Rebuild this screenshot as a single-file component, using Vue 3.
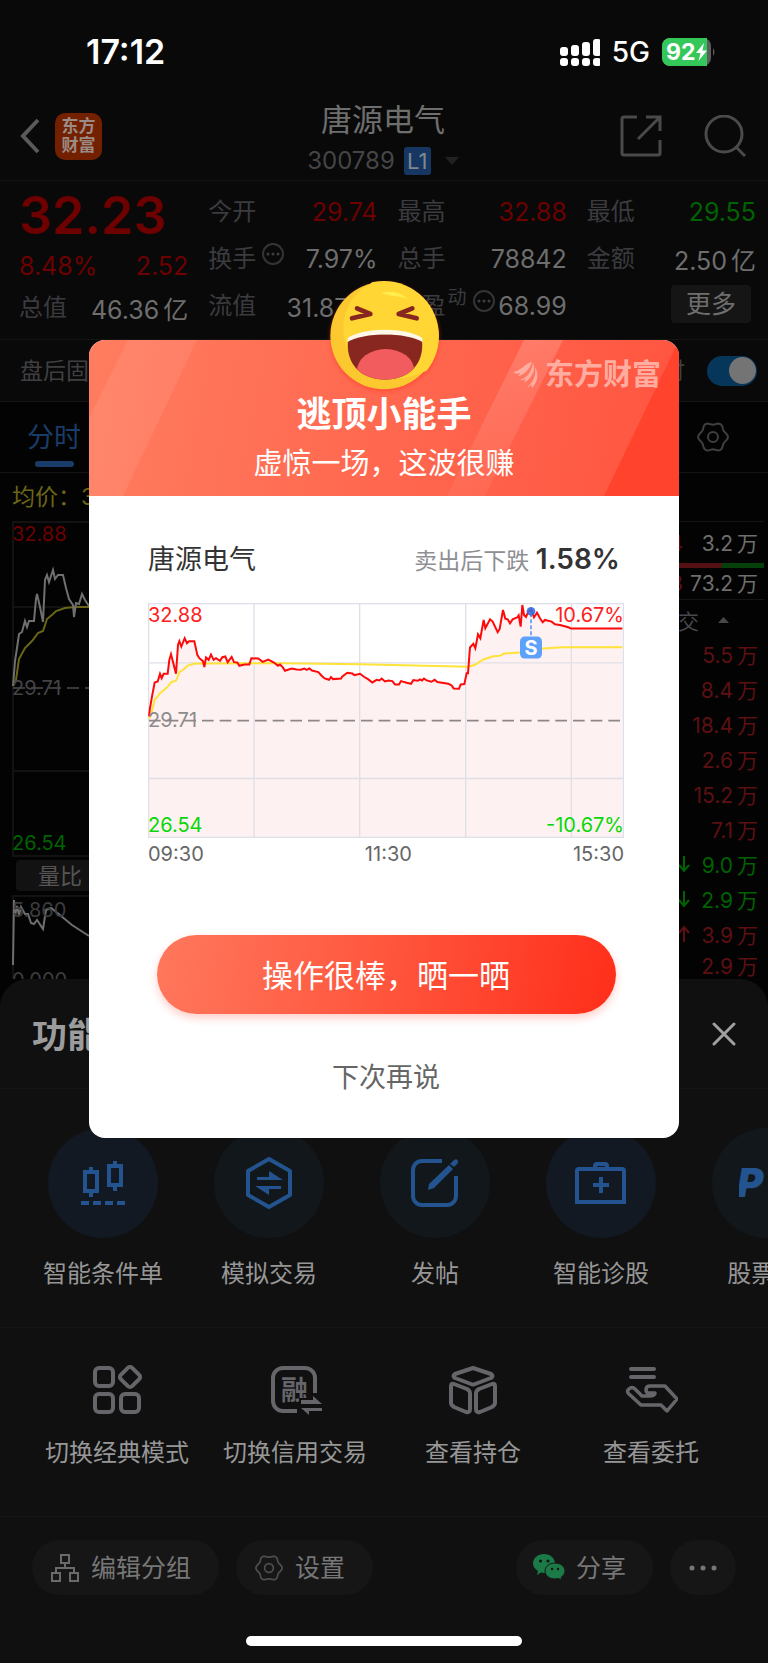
<template>
  <div class="page">
    <header class="status">
      <span class="time">17:12</span>
      <div class="status-right">
        <svg width="40" height="28" viewBox="0 0 40 28" fill="#fff">
          <rect v-for="(h, i) in [9, 11, 14, 17]" :key="'a' + h" :x="i * 11" :y="18 - h" width="8" :height="h" rx="3" />
          <rect v-for="i in 4" :key="i" :x="(i - 1) * 11" y="20" width="8" height="8" rx="3" />
        </svg>
        <span class="net">5G</span>
        <svg width="54" height="28" viewBox="0 0 54 28">
          <rect width="49" height="28" rx="8" fill="#5c5c5e" />
          <path d="M8 0H45V28H8A8 8 0 0 1 0 20V8A8 8 0 0 1 8 0Z" fill="#34c759" />
          <path d="M51 10Q54 14 51 18Z" fill="#5c5c5e" />
          <text x="4" y="22" class="battery">92</text>
          <path d="M42 5L34 15H38.500L36.500 23L45 12.500H40.500Z" fill="#fff" />
        </svg>
      </div>
    </header>

    <nav class="navbar">
      <div class="nav-left">
        <button class="plain" aria-label="返回">
          <svg width="20" height="36" viewBox="0 0 20 36" fill="none" stroke="#5a5a5a" stroke-width="4"><path d="M18 2L3 18L18 34" /></svg>
        </button>
        <a href="#" class="app-logo"><span>东方</span><span>财富</span></a>
      </div>
      <div class="nav-title">
        <h1>唐源电气</h1>
        <div class="code">
          <span>300789</span><b>L1</b>
          <svg width="14" height="8" viewBox="0 0 14 8"><path d="M0 0H14L7 8Z" fill="#222225" /></svg>
        </div>
      </div>
      <div class="nav-right">
        <button class="plain" aria-label="分享页面">
          <svg width="42" height="42" viewBox="0 0 42 42" fill="none" stroke="#4a4a4a" stroke-width="3">
            <path d="M17 2H4Q2 2 2 4V38Q2 40 4 40H38Q40 40 40 38V25M26 2H40V16M40 2L18 24" />
          </svg>
        </button>
        <button class="plain" aria-label="搜索">
          <svg width="42" height="42" viewBox="0 0 42 42" fill="none" stroke="#4a4a4a" stroke-width="3">
            <circle cx="20" cy="19" r="18" /><path d="M32 32L41 41" />
          </svg>
        </button>
      </div>
    </nav>

    <section class="quote">
      <div class="price-col">
        <strong>32.23</strong>
        <p class="red change"><span>8.48%</span><span>2.52</span></p>
        <p><label>总值</label><span>46.36<i>亿</i></span></p>
      </div>
      <div v-for="(col, i) in quotes" :key="i" class="quote-col">
        <p v-for="q in col" :key="q.label">
          <label>{{ q.label }}<sup v-if="q.sup">{{ q.sup }}</sup><svg v-if="q.more" width="22" height="22" viewBox="0 0 22 22">
            <circle cx="11" cy="11" r="10" fill="none" stroke="#343437" stroke-width="2" />
            <circle v-for="n in 3" :key="n" :cx="1 + n * 5" cy="11" r="1.500" fill="#3e3e42" />
          </svg></label>
          <span :class="q.tone">{{ q.value }}<i v-if="q.unit">{{ q.unit }}</i></span>
        </p>
        <button v-if="i === 2" class="more">更多</button>
      </div>
    </section>

    <section class="after-hours">
      <span>盘后固</span>
      <label class="switch-label">时<input type="checkbox" checked /></label>
    </section>

    <section class="tabs">
      <button class="plain tab">分时</button>
      <button class="plain" aria-label="图表设置">
        <svg width="32" height="32" viewBox="0 0 32 32" fill="none" stroke="#3f3f42" stroke-width="2">
          <path :d="gear" /><circle cx="16" cy="16" r="5" />
        </svg>
      </button>
    </section>

    <section class="market">
      <div class="market-left">
        <p class="avg">均价：3</p>
        <div class="back-chart">
          <svg width="100%" height="336" fill="none">
            <path d="M1 336V1H640M1 86H640M1 250H640M1 335H640" stroke="#121213" stroke-width="2" />
            <path d="M1 167H640" stroke="#3a3a3d" stroke-width="2" stroke-dasharray="12 6" />
            <polyline stroke="#6b6518" stroke-width="2" points="1,165 4,159 7,138 13,127 20,120 26,112 31,110 35,98 41,93 44,90 53,87 63,86 77,86" />
            <polyline stroke="#707070" stroke-width="2" points="1,165 3,140 5,127 7,113 10,111 13,100 15,106 17,100 22,100 24,78 25,73 28,86 31,101 33,59 35,54 37,61 41,49 43,58 46,54 51,54 54,67 57,78 61,84 62,96 64,82 67,83 70,73 73,79 77,85" />
          </svg>
          <span class="mark top red">32.88</span>
          <span class="mark middle">29.71</span>
          <span class="mark bottom green">26.54</span>
        </div>
        <button class="ratio">量比</button>
        <div class="back-chart sub">
          <svg width="100%" height="84" fill="none">
            <path d="M1 84V1H640" stroke="#121213" stroke-width="2" />
            <polyline stroke="#6e6e6e" stroke-width="2" points="1,70 2,5 3,21 5,11 7,20 9,12 13,19 16,19 19,28 22,29 25,25 31,34 34,15 39,13 43,16 60,30 77,41" />
          </svg>
          <span class="mark top">5.860</span>
          <span class="mark zero">0.000</span>
        </div>
      </div>
      <div class="market-right">
        <p class="order first"><span class="red">4</span><b>3.2<i>万</i></b></p>
        <div class="ratio-bar"></div>
        <p class="order"><span class="red">3</span><b>73.2<i>万</i></b></p>
        <div class="deal-head">
          <span>交</span>
          <svg width="11" height="6" viewBox="0 0 11 6"><path d="M0 6H11L5.500 0Z" fill="#48484b" /></svg>
        </div>
        <ul>
          <li v-for="(d, i) in deals" :key="i" :class="d.tone">
            <svg v-if="d.arrow" width="12" height="18" viewBox="0 0 12 18" fill="none" stroke="currentColor" stroke-width="2">
              <path :d="d.arrow === 'down' ? 'M6 1V16M1 10L6 16L11 10' : 'M6 17V2M1 8L6 2L11 8'" />
            </svg>
            <b>{{ d.value }}<i>万</i></b>
          </li>
        </ul>
      </div>
    </section>

    <section class="sheet">
      <div class="sheet-head">
        <h2>功能</h2>
        <button class="plain" aria-label="关闭">
          <svg width="24" height="24" viewBox="0 0 24 24" stroke="#a0a0a0" stroke-width="3" stroke-linecap="round"><path d="M2 2L22 22M22 2L2 22" /></svg>
        </button>
      </div>

      <div class="round-row">
        <button v-for="r in rounds" :key="r.label" class="plain round-item">
          <span class="circle" :class="{ blue: r.blue }">
            <svg width="56" height="56" viewBox="0 0 56 56" fill="none" stroke="#23548f" stroke-width="4">
              <template v-if="r.icon === 'candle'">
                <path d="M10 17H22V36H10ZM34 11H46V30H34ZM16 12V17M16 36V42M40 6V11M40 30V36" />
                <path d="M6 48H50" stroke-dasharray="8 4" />
              </template>
              <template v-else-if="r.icon === 'trade'">
                <path d="M28 4L49 16V40L28 52L7 40V16Z" stroke-linejoin="round" />
                <path d="M16 22H28V16L42 25H16ZM40 31H14L28 40V34H40Z" fill="#23548f" stroke="none" />
              </template>
              <template v-else-if="r.icon === 'post'">
                <path d="M35 6H15A9 9 0 0 0 6 15V41A9 9 0 0 0 15 50H40A9 9 0 0 0 49 41V21" />
                <path d="M21 35L22 29L42 10L46 14L27 33ZM43 9L47 5Q50 3 51 6V8L47 12Z" fill="#23548f" stroke="none" />
              </template>
              <template v-else-if="r.icon === 'clinic'">
                <path d="M4 47V16Q4 14 6 14H49Q51 14 51 16V47ZM22 13V11Q22 9 24 9H32Q34 9 34 11V13M28 22V38M20 30H36" />
              </template>
              <text v-else x="-2" y="42" class="pk">P</text>
            </svg>
          </span>
          <span class="caption">{{ r.label }}</span>
        </button>
      </div>

      <div class="grid-row">
        <button v-for="g in grids" :key="g.label" class="plain grid-item">
          <svg width="54" height="50" viewBox="0 0 54 50" fill="none" stroke="#66656a" stroke-width="4" stroke-linejoin="round">
            <template v-if="g.icon === 'blocks'">
              <rect x="5" y="3" width="18" height="18" rx="4" /><rect x="5" y="29" width="18" height="18" rx="4" />
              <rect x="31" y="29" width="18" height="18" rx="4" />
              <rect x="32" y="4" width="16" height="16" rx="3" transform="rotate(45 40 12)" />
            </template>
            <template v-else-if="g.icon === 'credit'">
              <path d="M29 46H15A10 10 0 0 1 5 36V13A10 10 0 0 1 15 3H37A10 10 0 0 1 47 13V28" />
              <text x="13" y="35" class="rong">融</text>
              <rect x="31" y="33" width="24" height="18" fill="#101010" stroke="none" />
              <path d="M33 35H45V31L54 39H33ZM54 43H33L41 50V46H54Z" fill="#66656a" stroke="none" />
            </template>
            <template v-else-if="g.icon === 'cube'">
              <path d="M27 3L45 9Q48 11 45 13L29 19Q27 20 25 19L9 13Q6 11 9 9Z" />
              <path d="M5 21Q5 18 8 19L21 24Q24 26 24 28V44Q24 48 20 47L8 42Q5 40 5 38ZM49 21Q49 18 46 19L33 24Q30 26 30 28V44Q30 48 34 47L46 42Q49 40 49 38Z" />
            </template>
            <template v-else>
              <path d="M7 4H30M7 12H30" stroke-linecap="round" />
              <path d="M5 24Q8 21 11 24L18 31H25Q31 31 31 28H25Q22 28 22 25Q22 21 26 21H41L53 34L43 46L37 40H17L5 29Q2 26 5 24Z" stroke-width="3.500" />
            </template>
          </svg>
          <span class="caption">{{ g.label }}</span>
        </button>
      </div>

      <footer class="actions">
        <button>
          <svg width="28" height="28" viewBox="0 0 28 28" fill="none" stroke="#6a6a6a" stroke-width="2">
            <path d="M10 1H18V9H10ZM1 19H9V27H1ZM19 19H27V27H19ZM14 9V14M5 19V14H23V19" />
          </svg>
          编辑分组
        </button>
        <button>
          <svg width="28" height="28" viewBox="0 0 32 32" fill="none" stroke="#4d4d50" stroke-width="2">
            <path :d="gear" /><circle cx="16" cy="16" r="5" />
          </svg>
          设置
        </button>
        <button class="share">
          <svg width="32" height="27" viewBox="0 0 32 27">
            <path d="M11 0C17 0 22 4 22 9.500C22 15 17 19 11 19L8 18.500L4 21L5 17C2 15 0 13 0 9.500C0 4 5 0 11 0Z" fill="#1b7a45" />
            <path d="M22 9C27.500 9 32 12.500 32 17C32 20 30 22 28 23.500L29 26.500L25.500 24.500L22 25C16.500 25 12 21.500 12 17C12 12.500 16.500 9 22 9Z" fill="#1b7a45" stroke="#171717" />
            <circle cx="7.500" cy="7" r="1.500" fill="#111" /><circle cx="15" cy="7" r="1.500" fill="#111" />
            <circle cx="19" cy="15" r="1.200" fill="#111" /><circle cx="25" cy="15" r="1.200" fill="#111" />
          </svg>
          分享
        </button>
        <button class="dots" aria-label="更多操作">
          <svg width="28" height="6" viewBox="0 0 28 6" fill="#777"><circle cx="3" cy="3" r="2.500" /><circle cx="14" cy="3" r="2.500" /><circle cx="25" cy="3" r="2.500" /></svg>
        </button>
      </footer>
      <div class="home-bar"></div>
    </section>

    <div class="overlay">
      <div class="modal" role="dialog" aria-labelledby="modal-title">
        <svg class="emoji" width="110" height="110" viewBox="57 32 330 330">
          <defs>
            <clipPath id="mouth"><path d="M113 215C160 185 290 185 337 215C340 290 290 328 225 328C160 328 110 290 113 215Z" /></clipPath>
          </defs>
          <circle cx="222" cy="196" r="161" fill="#fbc92f" />
          <path d="M180 41A161 161 0 1 1 340 305C260 350 100 310 100 175C100 120 130 65 180 41Z" fill="#ffd633" />
          <path d="M213 68C240 58 280 68 292 87C270 75 240 80 213 68Z" fill="#ffec4f" />
          <path d="M141 114L181 131L126 144M307 114L266 131L320 144" fill="none" stroke="#87271f" stroke-width="14" stroke-linecap="round" stroke-linejoin="round" />
          <path d="M113 203C160 170 290 170 337 203V222H113Z" fill="#fff8e8" />
          <g clip-path="url(#mouth)">
            <rect x="100" y="180" width="250" height="150" fill="#87271f" />
            <ellipse cx="227" cy="301" rx="86" ry="65" fill="#f25c5e" />
          </g>
        </svg>
        <header class="banner">
          <svg class="rays" viewBox="0 0 590 156" preserveAspectRatio="none">
            <defs>
              <linearGradient id="ray" x1="0" y1="0" x2="0" y2="1">
                <stop offset="0" stop-color="#fff" stop-opacity=".17" />
                <stop offset="1" stop-color="#fff" stop-opacity=".05" />
              </linearGradient>
            </defs>
            <path d="M39 0H108L34 156H0V78Z" fill="#fff" fill-opacity=".08" />
            <path d="M435 0H474L396 156H358Z" fill="url(#ray)" />
            <path d="M590 0V156H515Z" fill="#ff432d" />
          </svg>
          <div class="brand">
            <svg width="25" height="26" viewBox="0 0 25 26" fill="#ffada0">
              <path d="M0 10C7 10 12 1 19 0C17 7 10 14 5 14Q7 12 7 11Q3 13 0 10ZM7 18C16 15 19 7 20 1C23 7 20 15 11 21Q13 18 12 17Q10 19 7 18ZM14 25C21 20 23 13 22 5C26 12 25 19 19 26L18 22Q17 25 14 25Z" />
            </svg>
            东方财富
          </div>
          <h2 id="modal-title">逃顶小能手</h2>
          <p>虚惊一场，这波很赚</p>
        </header>
        <div class="modal-body">
          <div class="modal-head">
            <h3>唐源电气</h3>
            <p>卖出后下跌 <b>1.58%</b></p>
          </div>
          <div class="chart">
            <!-- three drawing units per pixel -->
            <svg viewBox="24 219 1428 707" preserveAspectRatio="none" fill="none">
              <path :d="`M27 922L${price}L1447 922Z`" fill="#fef1f1" />
              <path d="M342 220V925M659 220V925M977 220V925M1294 220V925M24 399H1452M24 747H1452" stroke="#dfdfe8" stroke-width="4" />
              <rect x="26" y="221" width="1424" height="703" stroke="#dfe1ea" stroke-width="4" />
              <path d="M27 573H1447" stroke="#8e8788" stroke-width="5" stroke-dasharray="35 18" />
              <polyline :points="average" stroke="#ffe338" stroke-width="6" />
              <polyline :points="price" stroke="#fe0a0a" stroke-width="6" />
              <path d="M1173 250V320" stroke="#5b9cf8" stroke-width="5" stroke-dasharray="12 6" />
              <circle cx="1173" cy="244" r="13" fill="#3b6fe0" fill-opacity=".9" />
              <rect x="1140" y="320" width="66" height="66" rx="14" fill="#5ea1fa" />
              <text x="1173" y="376" class="sell">S</text>
            </svg>
            <span class="mark top">32.88</span>
            <span class="mark top right">10.67%</span>
            <span class="mark middle">29.71</span>
            <span class="mark bottom">26.54</span>
            <span class="mark bottom right">-10.67%</span>
          </div>
          <div class="axis"><span>09:30</span><span>11:30</span><span>15:30</span></div>
          <button class="primary">操作很棒，晒一晒</button>
          <button class="plain later">下次再说</button>
        </div>
      </div>
    </div>
  </div>
</template>

<script setup>
const quotes = [
  [
    { label: '今开', value: '29.74', tone: 'red' },
    { label: '换手', value: '7.97%', more: true },
    { label: '流值', value: '31.87', unit: '亿' }
  ],
  [
    { label: '最高', value: '32.88', tone: 'red' },
    { label: '总手', value: '78842' },
    { label: '市盈', sup: '动', value: '68.99', more: true }
  ],
  [
    { label: '最低', value: '29.55', tone: 'green' },
    { label: '金额', value: '2.50', unit: '亿' }
  ]
];

const deals = [
  { value: '5.5', tone: 'red' },
  { value: '8.4', tone: 'red' },
  { value: '18.4', tone: 'red' },
  { value: '2.6', tone: 'red' },
  { value: '15.2', tone: 'red' },
  { value: '7.1', tone: 'red' },
  { value: '9.0', tone: 'green', arrow: 'down' },
  { value: '2.9', tone: 'green', arrow: 'down' },
  { value: '3.9', tone: 'red', arrow: 'up' },
  { value: '2.9', tone: 'red' }
];

const rounds = [
  { label: '智能条件单', icon: 'candle', blue: true },
  { label: '模拟交易', icon: 'trade' },
  { label: '发帖', icon: 'post' },
  { label: '智能诊股', icon: 'clinic', blue: true },
  { label: '股票PK', icon: 'pk' }
];

const grids = [
  { label: '切换经典模式', icon: 'blocks' },
  { label: '切换信用交易', icon: 'credit' },
  { label: '查看持仓', icon: 'cube' },
  { label: '查看委托', icon: 'hand' }
];

// 六瓣齿轮
const gear = 'M' + Array.from({ length: 72 }, (_, i) => {
  const a = (i * Math.PI) / 36;
  const r = 13.6 + 1.3 * Math.cos(6 * a);
  return (16 + r * Math.cos(a)).toFixed(1) + ' ' + (16 + r * Math.sin(a)).toFixed(1);
}).join('L') + 'Z';

const price = '27,560 30,535 36,500 44,458 53,455 60,432 65,445 71,432 83,432 88,390 93,373 100,400 108,432 114,345 118,334 124,350 134,325 141,340 147,334 163,334 172,375 178,385 189,394 193,412 198,383 206,390 213,374 221,390 228,385 240,393 247,382 256,380 263,397 275,381 282,397 292,398 298,408 313,404 328,404 334,385 355,386 368,396 385,389 402,398 414,408 420,404 428,412 435,423 455,416 470,419 482,420 493,416 500,420 508,416 516,422 535,427 545,438 554,446 567,450 573,442 579,448 603,446 607,440 622,429 637,431 643,436 660,432 672,441 685,449 697,458 710,450 718,452 725,446 735,455 745,452 757,454 765,464 777,464 783,454 800,459 813,462 820,451 833,453 840,449 846,452 852,446 860,452 874,456 884,450 892,457 925,462 935,467 941,476 957,477 962,464 973,463 980,430 984,430 990,353 1000,342 1006,355 1014,313 1021,325 1031,270 1036,295 1050,268 1058,275 1073,307 1079,297 1089,240 1096,266 1103,268 1110,280 1118,268 1132,262 1136,256 1142,290 1147,225 1152,255 1158,261 1165,245 1173,238 1182,262 1191,248 1200,265 1208,277 1215,270 1235,275 1245,283 1260,285 1285,292 1293,296 1447,296';
const average = '27,567 36,545 44,510 53,500 60,490 72,481 84,470 94,457 108,453 119,426 130,420 142,408 160,402 185,401 420,400 660,403 985,411 1005,405 1030,389 1060,379 1080,378 1092,371 1140,368 1172,360 1220,355 1270,352 1447,352';
</script>

<style>
body {
  background: #030303;
}
</style>

<style scoped>
.page, .page * {
  box-sizing: border-box;
}
.page {
  position: relative;
  overflow: hidden;
  background: #030303;
  color: #6e6e6e;
  font-family: Inter, "Noto Sans CJK SC", sans-serif;
}
h1, h2, h3, p, ul {
  margin: 0;
  padding: 0;
  font-weight: 400;
}
i {
  font-style: normal;
  margin-left: 4px;
}
svg {
  display: block;
  flex: none;
}
button {
  font-family: inherit;
  border: 0;
  cursor: pointer;
}
.plain {
  background: none;
  padding: 0;
}
.red {
  color: #6d0000;
}
.green {
  color: #006200;
}

.status {
  display: flex;
  justify-content: space-between;
  align-items: center;
  height: 92px;
  padding: 11px 52px 0 86px;
  background: #090909;
  color: #fff;
}
.time {
  font-size: 34px;
  font-weight: 600;
}
.status-right {
  display: flex;
  align-items: center;
  gap: 12px;
}
.net {
  font-size: 28px;
  font-weight: 500;
}
.battery {
  font-size: 23px;
  font-weight: 700;
  fill: #fff;
}

.navbar {
  display: grid;
  grid-template-columns: 1fr auto 1fr;
  align-items: center;
  height: 89px;
  padding: 0 22px 0 20px;
  background: #090909;
  border-bottom: 1px solid #141414;
}
.nav-left {
  display: flex;
  align-items: center;
  gap: 15px;
}
.app-logo {
  display: flex;
  flex-direction: column;
  align-items: center;
  justify-content: center;
  width: 47px;
  height: 47px;
  border-radius: 10px;
  background: #732000;
  color: #9b8b84;
  font-size: 17px;
  font-weight: 700;
  line-height: 19px;
  text-decoration: none;
}
.nav-title {
  padding-top: 2px;
}
.nav-title h1 {
  margin-bottom: 7px;
  font-size: 31px;
  line-height: 40px;
  text-align: center;
}
.code {
  display: flex;
  align-items: center;
  justify-content: center;
  gap: 9px;
  height: 28px;
  font-size: 24px;
  color: #454548;
}
.code b {
  width: 27px;
  line-height: 28px;
  border-radius: 3px;
  background: #163761;
  color: #808890;
  font-size: 22px;
  font-weight: 400;
  text-align: center;
}
.code svg {
  margin-left: 5px;
}
.nav-right {
  display: flex;
  justify-content: flex-end;
  gap: 42px;
}

.quote {
  display: grid;
  grid-template-columns: repeat(4, 1fr);
  gap: 20px;
  height: 159px;
  padding: 7px 12px 0 19px;
  background: #090909;
  border-bottom: 1px solid #141414;
  font-size: 25px;
}
.quote p {
  display: flex;
  justify-content: space-between;
  align-items: center;
  height: 47px;
  white-space: nowrap;
}
.quote label {
  display: flex;
  align-items: center;
  gap: 6px;
  font-size: 24px;
  line-height: 34px;
  color: #3b3b3f;
}
.quote label svg {
  margin-bottom: 10px;
}
.quote sup {
  margin: 0 0 16px -4px;
  font-size: 19px;
  line-height: 20px;
}
.price-col strong {
  display: block;
  font-size: 52px;
  font-weight: 600;
  line-height: 55px;
  color: #6d0000;
}
.quote .price-col p {
  height: 37px;
}
.quote .price-col .change {
  height: 46px;
}
.more {
  display: block;
  width: 80px;
  height: 38px;
  margin: 3px 5px 0 auto;
  padding: 0;
  border-radius: 4px;
  background: #151515;
  color: #6e6e6e;
  font-size: 25px;
  line-height: 38px;
}

.after-hours {
  display: flex;
  justify-content: space-between;
  align-items: center;
  height: 62px;
  padding: 0 11px 0 20px;
  background: #090909;
  border-bottom: 1px solid #141414;
  font-size: 23px;
  line-height: 34px;
  color: #3f3f42;
}
.switch-label {
  display: flex;
  align-items: center;
  gap: 22px;
}
.switch-label input {
  appearance: none;
  display: flex;
  justify-content: flex-end;
  align-items: center;
  width: 50px;
  height: 30px;
  margin: 0;
  padding: 1px;
  border-radius: 15px;
  background: #06365a;
}
.switch-label input::after {
  content: "";
  width: 27px;
  height: 27px;
  border-radius: 50%;
  background: #747474;
}

.tabs {
  display: flex;
  justify-content: space-between;
  align-items: center;
  height: 71px;
  padding: 0 39px 0 27px;
  border-bottom: 1px solid #141414;
}
.tab {
  display: flex;
  flex-direction: column;
  align-items: center;
  height: 100%;
  padding-top: 16px;
  color: #1a3c69;
  font-size: 27px;
  line-height: 40px;
}
.tab::after {
  content: "";
  width: 39px;
  height: 6px;
  margin-top: 3px;
  border-radius: 3px;
  background: #1a3c69;
}

.market {
  display: flex;
}
.market-left {
  flex: 1;
  min-width: 0;
  padding-left: 12px;
}
.avg {
  font-size: 23px;
  line-height: 48px;
  color: #6b6518;
}
.back-chart, .chart {
  position: relative;
}
.mark {
  position: absolute;
  left: 0;
  font-size: 20px;
  line-height: 24px;
}
.back-chart .top {
  top: 1px;
}
.back-chart .middle {
  top: 155px;
  color: #444447;
}
.back-chart .bottom {
  bottom: 2px;
  color: #006200;
}
.ratio {
  display: block;
  height: 31px;
  margin: 3px 0 4px 4px;
  padding: 0 22px;
  border-radius: 4px;
  background: #121212;
  color: #555;
  font-size: 22px;
  line-height: 32px;
}
.sub {
  height: 84px;
  overflow: hidden;
  color: #3c3c3f;
}
.sub .top {
  top: 3px;
}
.sub .zero {
  top: 73px;
}
.market-right {
  width: 130px;
  padding: 48px 4px 0 0;
  font-size: 21px;
}
.market-right b {
  font-weight: 400;
}
.order {
  display: flex;
  justify-content: flex-end;
  padding-right: 6px;
  border-bottom: 1px solid #141414;
  line-height: 31px;
}
.order.first {
  padding-top: 2px;
  border-top: 1px solid #141414;
  border-bottom: 0;
  line-height: 39px;
}
.order b {
  width: 75px;
  text-align: right;
}
.ratio-bar {
  height: 5px;
  background: linear-gradient(115deg, #541114 66%, #05400a 66%);
}
.deal-head {
  display: flex;
  justify-content: flex-end;
  align-items: center;
  gap: 19px;
  height: 36px;
  padding: 3px 35px 0 0;
  color: #48484b;
}
ul {
  list-style: none;
}
li {
  display: flex;
  justify-content: flex-end;
  align-items: center;
  height: 35px;
  padding-right: 6px;
}
li:last-child {
  height: 28px;
}
li b {
  width: 68px;
  text-align: right;
}
.market-right .red {
  color: #5c1012;
}

.sheet {
  padding-bottom: 17px;
  border-radius: 28px 28px 0 0;
  background: #101010;
}
.sheet-head {
  display: flex;
  justify-content: space-between;
  align-items: center;
  height: 110px;
  padding: 0 32px;
  border-bottom: 1px solid #161616;
}
.sheet-head h2 {
  padding-bottom: 3px;
  font-size: 35px;
  font-weight: 600;
  color: #9c9c9c;
}
.round-row {
  display: flex;
  overflow: hidden;
  padding: 39px 0 36px 20px;
  border-bottom: 1px solid #161616;
}
.round-item, .grid-item {
  display: flex;
  flex-direction: column;
  align-items: center;
}
.round-item {
  flex: 0 0 166px;
  gap: 19px;
}
.circle {
  display: flex;
  align-items: center;
  justify-content: center;
  width: 110px;
  height: 110px;
  border-radius: 50%;
  background: #11171a;
}
.circle.blue {
  background: #121922;
}
.caption {
  font-size: 24px;
  line-height: 34px;
  color: #979797;
  white-space: nowrap;
}
.pk {
  font-size: 40px;
  font-style: italic;
  font-weight: 900;
  fill: #23548f;
  stroke: none;
}
.grid-row {
  display: grid;
  grid-template-columns: repeat(4, 1fr);
  padding: 37px 28px 46px;
  border-bottom: 1px solid #161616;
}
.grid-item {
  gap: 21px;
}
.rong {
  font-size: 27px;
  font-weight: 700;
  fill: #66656a;
  stroke: none;
}
.actions {
  display: flex;
  gap: 17px;
  padding: 23px 32px 41px;
}
.actions button {
  display: flex;
  align-items: center;
  gap: 12px;
  height: 55px;
  padding: 0 28px 0 19px;
  border-radius: 28px;
  background: #161616;
  color: #777;
  font-size: 25px;
  line-height: 34px;
}
.actions .share {
  margin-left: auto;
  padding: 0 27px 0 17px;
  gap: 11px;
}
.actions .dots {
  padding: 0 19px;
}
.home-bar {
  width: 36%;
  height: 10px;
  margin: 0 auto;
  border-radius: 5px;
  background: #fff;
}

.overlay {
  position: absolute;
  inset: 0;
  padding: 340px 89px 0;
}
.modal {
  position: relative;
  border-radius: 16px;
  background: #fff;
}
.emoji {
  position: absolute;
  z-index: 1;
  top: -59px;
  left: 50%;
  margin-left: -55px;
  border-radius: 50%;
  filter: drop-shadow(0 2px 2px rgba(255, 50, 30, .5));
}
.banner {
  position: relative;
  overflow: hidden;
  padding: 53px 0 10px;
  border-radius: 16px 16px 0 0;
  background: linear-gradient(100deg, #ff7d60, #ff684f 50%, #ff5440);
  color: #fff;
  text-align: center;
}
.rays {
  position: absolute;
  inset: 0;
  width: 100%;
  height: 100%;
}
.brand {
  position: absolute;
  top: 15px;
  right: 18px;
  display: flex;
  align-items: center;
  gap: 7px;
  font-size: 29px;
  font-weight: 700;
  line-height: 40px;
  color: #ffada0;
}
.banner h2 {
  position: relative;
  margin-bottom: 7px;
  font-size: 35px;
  font-weight: 600;
  line-height: 42px;
}
.banner p {
  position: relative;
  font-size: 29px;
  line-height: 44px;
}
.modal-body {
  padding: 43px 55px 40px 59px;
}
.modal-head {
  display: flex;
  justify-content: space-between;
  align-items: baseline;
  height: 40px;
  margin-bottom: 24px;
  padding-right: 4px;
  line-height: 40px;
}
.modal-head h3 {
  font-size: 27px;
  color: #333;
}
.modal-head p {
  font-size: 23px;
  color: #8f8f93;
}
.modal-head b {
  font-size: 28px;
  font-weight: 600;
  color: #333;
}
.chart svg {
  width: 100%;
  height: 235px;
}
.sell {
  font-size: 60px;
  font-weight: 700;
  fill: #fff;
  text-anchor: middle;
}
.chart .mark {
  color: #fe2020;
}
.chart .top {
  top: 0;
}
.chart .middle {
  top: 105px;
  color: #8c8c8c;
}
.chart .bottom {
  bottom: 1px;
  color: #08d808;
}
.chart .right {
  left: auto;
  right: 0;
}
.axis {
  display: flex;
  justify-content: space-between;
  font-size: 20px;
  line-height: 32px;
  color: #666;
}
.primary {
  display: block;
  width: calc(100% - 17px);
  height: 79px;
  margin: 65px auto 44px;
  padding: 0 0 2px;
  border-radius: 40px;
  background: linear-gradient(100deg, #ff785d, #ff5940 45%, #ff2e1a);
  box-shadow: 0 4px 8px rgba(255, 60, 40, .25);
  color: #fff;
  font-size: 31px;
}
.later {
  display: block;
  margin: 0 auto;
  font-size: 27px;
  line-height: 40px;
  color: #666;
}
</style>
